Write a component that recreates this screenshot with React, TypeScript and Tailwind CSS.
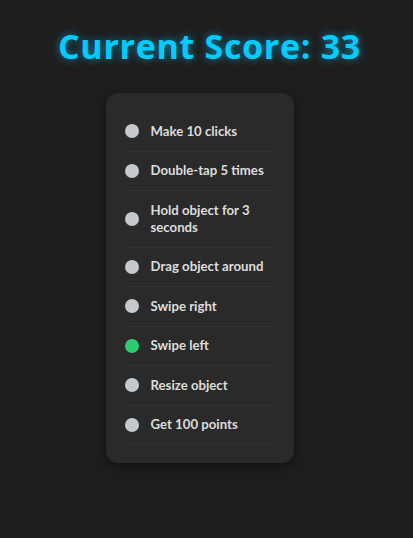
import React from "react";

const tasks = [
  { label: "Make 10 clicks", done: false },
  { label: "Double-tap 5 times", done: false },
  { label: "Hold object for 3 seconds", done: false },
  { label: "Drag object around", done: false },
  { label: "Swipe right", done: false },
  { label: "Swipe left", done: true },
  { label: "Resize object", done: false },
  { label: "Get 100 points", done: false },
];

export default function App() {
  return (
    <div className="min-h-[538px] bg-[#1e1e1e] flex flex-col items-center pt-[25px] font-['Open_Sans',sans-serif]">
      <h1 className="ml-[6px] text-[34px] leading-[42px] font-bold tracking-[0.7px] text-[#00ccff] [text-shadow:0_0_8px_rgba(0,204,255,0.6)]">
        Current Score: 33
      </h1>
      <div className="mt-[26px] mr-[14px] w-[188px] rounded-xl bg-[#2a2a2a] px-[19px] pt-[19px] pb-[18px] shadow-[0_4px_12px_rgba(0,0,0,0.4)]">
        <ul>
          {tasks.map((t) => (
            <li
              key={t.label}
              className="flex items-center gap-3 py-[10.75px] border-b border-[#333333]"
            >
              <span
                className={
                  "w-[14px] h-[14px] rounded-full shrink-0 " +
                  (t.done ? "bg-[#2ecc71]" : "bg-[#c4c9ce]")
                }
              />
              <span className="text-[13.2px] leading-[17px] font-bold text-[#dddddd] font-['Lato',sans-serif]">
                {t.label}
              </span>
            </li>
          ))}
        </ul>
      </div>
    </div>
  );
}
